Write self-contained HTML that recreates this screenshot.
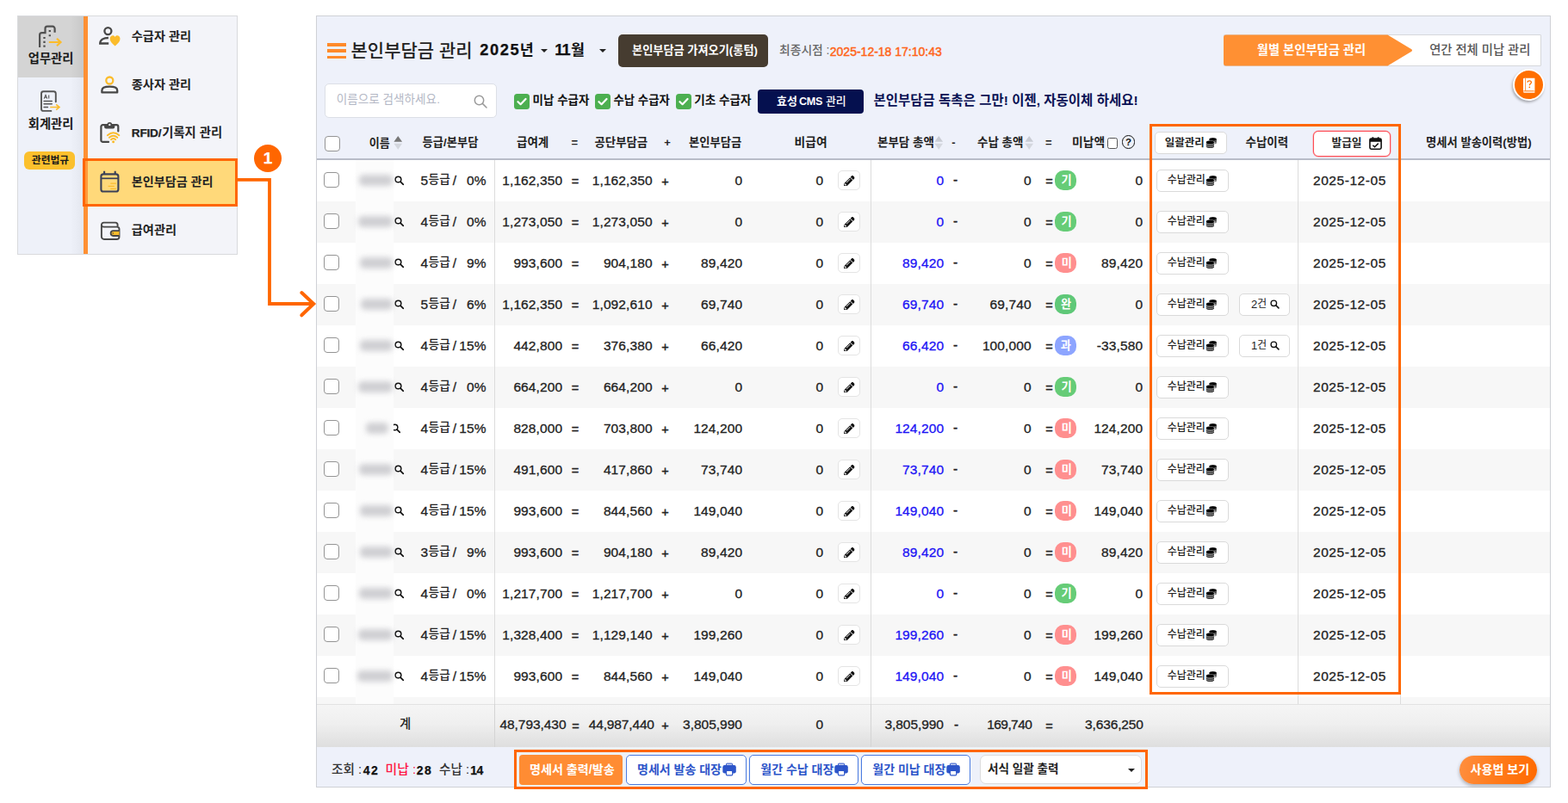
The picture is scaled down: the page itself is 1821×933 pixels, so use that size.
<!DOCTYPE html>
<html lang="ko">
<head>
<meta charset="utf-8">
<title>본인부담금 관리</title>
<style>
html,body{margin:0;padding:0;background:#fff;}
body{width:1821px;height:933px;position:relative;overflow:hidden;font-family:"Liberation Sans",sans-serif;color:#222;}
body div,body svg{position:absolute;box-sizing:border-box;}
.t{white-space:nowrap;}
.h{font-family:"Liberation Sans","Noto Sans CJK KR",sans-serif;font-weight:700;}
.hm{font-weight:500;}
.hr{font-weight:400;}
.cb{width:18px;height:18px;border:1.4px solid #949494;border-radius:4px;background:#fff;}
.gcb{width:18px;height:18px;border-radius:3.5px;background:#4caf50;}
.btn{background:#fff;border:1.3px solid #dadada;border-radius:5px;}
.pill{width:25px;height:23px;border-radius:10px;color:#fff;font-weight:700;font-size:14px;line-height:23px;text-align:center;}
.sep{width:1px;background:#dcdcdc;}
.bb{background:#fff;border:1px solid #4a7be0;border-radius:5px;}
</style>
</head>
<body>

<svg width="0" height="0" style="left:0;top:0">
<defs>
<symbol id="i-coin" viewBox="0 0 14 14">
 <path d="M4.2 3.1c0-1.2 1.9-2.1 4.4-2.1s4.4.9 4.4 2.1v3.6c0 .9-1 1.6-2.6 1.9V6.1c0-1.4-2.2-2.4-4.8-2.4-.5 0-.9 0-1.4.1z" fill="#858585"/>
 <ellipse cx="8.6" cy="3" rx="4.2" ry="1.7" fill="#000"/>
 <path d="M.8 6.4c0-1.2 2-2.1 4.6-2.1S10 5.2 10 6.4v4.6c0 1.2-2 2.1-4.6 2.1S.8 12.2.8 11z" fill="#858585"/>
 <ellipse cx="5.4" cy="6.4" rx="4.5" ry="1.9" fill="#000"/>
 <path d="M.8 9c.9.9 2.6 1.3 4.6 1.3s3.7-.4 4.6-1.3M.8 11.2c.9.9 2.6 1.3 4.6 1.3s3.7-.4 4.6-1.3" fill="none" stroke="#111" stroke-width=".8"/>
 <path d="M10.5 5.8c1-.2 1.9-.6 2.4-1.1" fill="none" stroke="#111" stroke-width=".7"/>
</symbol>
<symbol id="i-pen" viewBox="0 0 512 512">
 <path fill="#111" d="M497.9 142.1l-46.1 46.1c-4.7 4.7-12.3 4.7-17 0l-111-111c-4.7-4.7-4.7-12.3 0-17l46.1-46.1c18.7-18.7 49.1-18.7 67.9 0l60.1 60.1c18.8 18.7 18.8 49.1 0 67.9zM284.2 99.8L21.6 362.4.4 483.9c-2.9 16.4 11.4 30.6 27.8 27.8l121.5-21.3 262.6-262.6c4.7-4.7 4.7-12.3 0-17l-111-111c-4.8-4.7-12.4-4.7-17.1 0zM124.1 339.9c-5.5-5.5-5.5-14.3 0-19.8l154-154c5.5-5.5 14.3-5.5 19.8 0s5.5 14.3 0 19.8l-154 154c-5.5 5.5-14.3 5.5-19.8 0zM88 424h48v36.3l-64.5 11.3-31.1-31.1L51.7 376H88v48z"/>
</symbol>
<symbol id="i-mag" viewBox="0 0 12 12">
 <circle cx="4.7" cy="4.7" r="3.5" fill="none" stroke="currentColor" stroke-width="1.55"/>
 <path d="M7.4 7.4L10.8 10.8" stroke="currentColor" stroke-width="1.75" stroke-linecap="round"/>
</symbol>
<symbol id="i-print" viewBox="0 0 16 16">
 <rect x="4.4" y="1.1" width="7.2" height="4" rx=".9" fill="#c9d3f1" stroke="#2d55c9" stroke-width="1"/>
 <rect x=".3" y="3.1" width="15.5" height="9.4" rx="2.2" fill="#2d55c9"/>
 <rect x="4.4" y="9.4" width="7.3" height="5.5" rx="1.2" fill="#fff" stroke="#2d55c9" stroke-width="1.2"/>
</symbol>
<symbol id="i-cal" viewBox="0 0 15 15">
 <rect x=".9" y="2" width="13.2" height="12.2" rx="1.6" fill="#fff" stroke="#111" stroke-width="1.6"/>
 <path d="M.9 3.6A1.6 1.6 0 0 1 2.5 2h10A1.6 1.6 0 0 1 14.1 3.6V5.8H.9z" fill="#111"/>
 <rect x="3.4" y=".2" width="1.9" height="3" rx=".5" fill="#111"/>
 <rect x="9.7" y=".2" width="1.9" height="3" rx=".5" fill="#111"/>
 <path d="M4.3 9.7l2.2 2.1 4.2-4.2" fill="none" stroke="#111" stroke-width="1.5"/>
</symbol>
<symbol id="i-sort" viewBox="0 0 10 16">
 <path d="M5 .5L9.6 7H.4z" fill="var(--u,#c9ccd4)"/>
 <path d="M5 15.5L.4 9h9.2z" fill="#d4d7de"/>
</symbol>
</defs>
</svg>

<div style="left:20px;top:18px;width:256px;height:278px;background:#f3f4f9;border:1px solid #d9dadd;"></div>
<div style="left:21px;top:19px;width:76px;height:276px;background:linear-gradient(90deg,#eef1f9 0,#eef1f9 80%,#e4e7ef 100%);"></div>
<div style="left:21px;top:19px;width:76px;height:71px;background:linear-gradient(90deg,#d4d4d4 0,#d4d4d4 80%,#c9c9c9 100%);"></div>
<div style="left:97px;top:19px;width:5px;height:276px;background:#ff9033;"></div>
<svg style="left:40px;top:24px" width="36" height="32" viewBox="0 0 36 32" fill="none" stroke="#505050" stroke-width="2.2">
<path d="M6.1 30.9V16.7A2.5 2.5 0 0 1 8.6 14.2H12.5V9.2A2.5 2.5 0 0 1 15 6.7H21.1A2.5 2.5 0 0 1 23.6 9.2V13.8"/>
<path d="M11.5 19v2.1M11.5 23.8v2.1M11.5 28.6v2.1M17.8 11v2.1M17.8 16.2v2.1" stroke-width="2.3"/>
<path d="M16.8 25H30.2M26 20.8L30.5 25L26 29.2" stroke="#fbbc2c" stroke-width="2.2"/>
</svg>
<svg style="left:40px;top:101px" width="36" height="32" viewBox="0 0 36 32" fill="none" stroke="#555" stroke-width="1.9">
<path d="M19.4 27.9H10.5A2.5 2.5 0 0 1 8 25.4V7.8A2.5 2.5 0 0 1 10.5 5.3H22.3A2.5 2.5 0 0 1 24.8 7.8V17.3" stroke-linecap="round"/>
<path d="M11 16.45H20.3M11 19.7H20.3M11 23.5H15.5" stroke-width="1.4" stroke-linecap="round"/>
<path d="M18.2 23.5H28.8M25.2 20.4L29 23.5L25.2 26.6" stroke="#fbbc2c" stroke-width="1.6"/>
<path d="M11.2 13.6L13 9.4L14.8 13.6M11.9 12.3H14.1M16.7 9.4V13.6" stroke-width="1.1"/>
</svg>
<div class="t h" style="left:32.8px;top:60.4px;font-size:14.3px;line-height:17.2px;color:#1a1a1a">업무관리</div>
<div class="t h" style="left:32.8px;top:135.9px;font-size:14.3px;line-height:17.1px;color:#1a1a1a">회계관리</div>
<div style="left:28px;top:176px;width:59px;height:21px;background:#fbc02d;border-radius:6px;"></div>
<div class="t h" style="left:36.8px;top:179.4px;font-size:11.8px;line-height:14.1px;color:#1a1a1a">관련법규</div>
<div class="t" style="top:144.5px;font-size:13.6px;line-height:20px;font-weight:700;-webkit-text-stroke:.25px;letter-spacing:-0.2px;left:20.05px;width:300px;text-align:center;">RFID/</div>
<div class="t h" style="left:188.3px;top:145.9px;font-size:14.3px;line-height:17.2px">기록지 관리</div>
<div style="left:96px;top:184px;width:180px;height:56px;background:#ffd97a;border:3px solid #ff6600;"></div>
<div style="left:99px;top:187px;width:3px;height:50px;background:#ff9a3c;"></div>
<div class="t h" style="left:152.8px;top:33.5px;font-size:14.2px;line-height:17.1px">수급자 관리</div>
<div class="t h" style="left:152.8px;top:89.5px;font-size:14.2px;line-height:17.1px">종사자 관리</div>
<div class="t h" style="left:152.8px;top:202.6px;font-size:14.1px;line-height:16.9px">본인부담금 관리</div>
<div class="t h" style="left:152.8px;top:259px;font-size:14.2px;line-height:17.1px">급여관리</div>
<svg style="left:110px;top:26px" width="36" height="32" viewBox="0 0 36 32" fill="none" stroke="#474747" stroke-width="2.3">
<circle cx="15.4" cy="10.1" r="4"/>
<path d="M15.9 18C10 18 6.2 20.6 6.2 24.5H16.2"/>
<path d="M23.6 27.4C20 24.5 17.7 22.1 17.7 19C17.7 16.8 19.3 15.3 21 15.3C22.2 15.3 23.1 15.9 23.6 16.9C24.1 15.9 25 15.3 26.2 15.3C27.9 15.3 29.5 16.8 29.5 19C29.5 22.1 27.2 24.5 23.6 27.4Z" fill="#fbbc2c" stroke="none"/>
</svg>
<svg style="left:110px;top:82px" width="36" height="32" viewBox="0 0 36 32" fill="none" stroke-width="2.3">
<circle cx="17.3" cy="11.5" r="4" stroke="#fbbc2c"/>
<path d="M8.4 25.4V23C8.4 20.3 12.3 18.7 17.3 18.7S26.2 20.3 26.2 23V25.4Z" stroke="#474747" stroke-linejoin="round"/>
</svg>
<svg style="left:110px;top:138px" width="36" height="32" viewBox="0 0 36 32" fill="none" stroke="#474747" stroke-width="2.2">
<path d="M16 26.9H9.4A2 2 0 0 1 7.4 24.9V9.1A2 2 0 0 1 9.4 7.1H25.3A2 2 0 0 1 27.3 9.1V14.4" stroke-linecap="round"/>
<path d="M11.1 7H14.4A2.9 2.9 0 0 1 20.2 7H23.3V9.5A2 2 0 0 1 21.3 11.5H13.1A2 2 0 0 1 11.1 9.5Z" fill="#474747" stroke="none"/>
<circle cx="17.3" cy="6.9" r="1.2" fill="#f3f4f9" stroke="none"/>
<path d="M14.8 19.2Q21.6 13.2 28.4 19.2M16.9 21.8Q21.6 17.6 26.3 21.8M19 24.2Q21.6 21.9 24.2 24.2" stroke="#fbbc2c" stroke-width="1.9" stroke-linecap="round"/>
<circle cx="21.6" cy="26.7" r="1.5" fill="#fbbc2c" stroke="none"/>
</svg>
<svg style="left:110px;top:195px" width="36" height="32" viewBox="0 0 36 32" fill="none" stroke="#3b4157" stroke-width="2.1">
<rect x="7.4" y="7.4" width="20" height="20.1" rx="2.6"/>
<path d="M7.4 12.3H27.4" stroke-width="1.7"/>
<path d="M11.1 3.8V7.4M23.7 3.8V7.4"/>
<path d="M18.3 18.2H24.9M15.6 21.4H22.8M18.3 24.3H24.9" stroke="#fbbc2c" stroke-width="1.3"/>
</svg>
<svg style="left:110px;top:252px" width="36" height="32" viewBox="0 0 36 32" fill="none" stroke="#474747" stroke-width="1.9">
<path d="M7.9 9.2V23A3 3 0 0 0 10.9 26H25.5A3 3 0 0 0 28.5 23V14A2.6 2.6 0 0 0 25.9 11.6H10.5A2.6 2.6 0 0 1 7.9 9.2A2.6 2.6 0 0 1 10.5 6.6H24A2.6 2.6 0 0 1 26.6 9.2V11.5"/>
<path d="M28.5 16.2H21.5A2.9 2.9 0 0 0 21.5 22H28.5" fill="#fbbc2c" stroke-width="1.8"/>
<circle cx="21.3" cy="19" r=".8" fill="#474747" stroke="none"/>
</svg>
<div style="left:367px;top:18px;width:1434px;height:897px;background:#eef1fa;border:1px solid #cfd1d6;"></div>
<div style="left:368px;top:186px;width:1432px;height:632px;background:#fff;"></div>
<div style="left:380px;top:50px;width:21.7px;height:3.6px;background:#ff8a2a;"></div>
<div style="left:380px;top:57.3px;width:21.7px;height:3.6px;background:#ff8a2a;"></div>
<div style="left:380px;top:64.6px;width:21.7px;height:3.6px;background:#ff8a2a;"></div>
<div class="t h hm" style="left:407.5px;top:46px;font-size:21px;line-height:25.2px">본인부담금 관리</div>
<div class="t" style="top:44px;font-size:18.3px;line-height:28px;font-weight:700;-webkit-text-stroke:.25px;color:#111;letter-spacing:1.55px;left:430.77px;width:300px;text-align:center;">2025</div>
<div class="t h" style="left:603.8px;top:47.5px;font-size:17.4px;line-height:20.9px;color:#111">년</div>
<div class="t" style="top:44px;font-size:18.3px;line-height:28px;font-weight:700;-webkit-text-stroke:.25px;color:#111;letter-spacing:-1px;left:503px;width:300px;text-align:center;">11</div>
<div class="t h" style="left:663px;top:47.6px;font-size:17.4px;line-height:20.9px;color:#111">월</div>
<svg style="left:627.5px;top:57px" width="8" height="4" viewBox="0 0 8 4"><path d="M0 0h8L4 4z" fill="#222"/></svg>
<svg style="left:695.8px;top:57px" width="8" height="4" viewBox="0 0 8 4"><path d="M0 0h8L4 4z" fill="#222"/></svg>
<div style="left:718px;top:39.5px;width:174px;height:38px;background:#463c30;border-radius:5px;"></div>
<div class="t h" style="left:734px;top:50.8px;font-size:13.2px;line-height:15.9px;color:#fff">본인부담금 가져오기(롱텀)</div>
<div class="t h hm" style="left:905px;top:51px;font-size:13.8px;line-height:16.5px;color:#666">최종시점 :</div>
<div class="t" style="top:49.5px;font-size:14px;line-height:20px;color:#ff6418;left:878.8px;width:300px;text-align:center;-webkit-text-stroke:.45px #ff6418;">2025-12-18 17:10:43</div>
<div style="left:1421px;top:40px;width:369px;height:37px;background:#fff;border:1px solid #d6d8dc;border-radius:1px;"></div>
<svg style="left:1421px;top:40px" width="222" height="37" viewBox="0 0 222 37"><path d="M3 .5H190.5L218.3 17.3a1.4 1.4 0 0 1 0 2.4L190.5 36.5H3A3 3 0 0 1 0 33.5V3.5A3 3 0 0 1 3 .5z" fill="#ff9033"/></svg>
<div class="t h" style="left:1459.8px;top:50.1px;font-size:14.3px;line-height:17.2px;color:#fff">월별 본인부담금 관리</div>
<div class="t h hm" style="left:1660.2px;top:50.1px;font-size:14.3px;line-height:17.2px;color:#555">연간 전체 미납 관리</div>
<div style="left:1757.2px;top:80.2px;width:37px;height:37px;background:#ff6f00;border:2px solid #fff;border-radius:50%;box-shadow:-1px 2px 3px rgba(0,0,0,.3);"></div>
<svg style="left:1768px;top:89.5px" width="16" height="19" viewBox="0 0 16 19">
<path d="M1 1.8A1.1 1.1 0 0 1 2.1.7H14.4V15H1z" fill="#fff"/>
<path d="M3.5.7V15" stroke="#ff6f00" stroke-width=".7"/>
<path d="M1 15.3V16.8A1.1 1.1 0 0 0 2.1 17.9H14.4V15z" fill="#ffd9bd"/>
<path d="M2.2 15.6H13.5" stroke="#ff6f00" stroke-width=".6"/>
<path d="M6 5.8C6 4.5 7 3.8 8.2 3.8S10.4 4.5 10.4 5.7C10.4 7.3 8.3 7.3 8.3 9.3" fill="none" stroke="#ff6f00" stroke-width="1.3"/>
<circle cx="8.3" cy="11.3" r=".85" fill="#ff6f00"/>
</svg>
<div style="left:377.3px;top:97.3px;width:199.4px;height:40px;background:#fff;border:1px solid #dcdfe6;border-radius:5px;"></div>
<div class="t h hr" style="left:390.8px;top:108.4px;font-size:13.6px;line-height:16.3px;color:#b4b8c5">이름으로 검색하세요.</div>
<svg style="left:549.5px;top:109.5px" width="16" height="16" viewBox="0 0 16 16" fill="none" stroke="#9a9a9a" stroke-width="1.5"><circle cx="6.5" cy="6.5" r="5.2"/><path d="M10.4 10.4L15 15" stroke-linecap="round"/></svg>
<div class="gcb" style="left:597px;top:108.7px"><svg style="left:3px;top:4px" width="12" height="10" viewBox="0 0 12 10"><path d="M1.5 5.2L4.6 8.2 10.5 2" fill="none" stroke="#fff" stroke-width="2.2" stroke-linecap="round" stroke-linejoin="round"/></svg></div>
<div class="t h" style="left:618.6px;top:109.2px;font-size:13.5px;line-height:16.2px;color:#111">미납 수급자</div>
<div class="gcb" style="left:691.3px;top:108.7px"><svg style="left:3px;top:4px" width="12" height="10" viewBox="0 0 12 10"><path d="M1.5 5.2L4.6 8.2 10.5 2" fill="none" stroke="#fff" stroke-width="2.2" stroke-linecap="round" stroke-linejoin="round"/></svg></div>
<div class="t h" style="left:712.5px;top:109.3px;font-size:13.4px;line-height:16.1px;color:#111">수납 수급자</div>
<div class="gcb" style="left:785px;top:108.7px"><svg style="left:3px;top:4px" width="12" height="10" viewBox="0 0 12 10"><path d="M1.5 5.2L4.6 8.2 10.5 2" fill="none" stroke="#fff" stroke-width="2.2" stroke-linecap="round" stroke-linejoin="round"/></svg></div>
<div class="t h" style="left:806.3px;top:109.2px;font-size:13.6px;line-height:16.3px;color:#111">기초 수급자</div>
<div style="left:880px;top:103.7px;width:123px;height:28.8px;background:#05104f;border-radius:4px;"></div>
<div class="t h" style="left:902.1px;top:109.9px;font-size:13px;line-height:15.6px;color:#fff">효성</div>
<div class="t" style="top:108px;font-size:12.6px;line-height:20px;font-weight:700;color:#fff;letter-spacing:-0.25px;left:791.62px;width:300px;text-align:center;">CMS</div>
<div class="t h hm" style="left:959px;top:110px;font-size:12.9px;line-height:15.5px;color:#fff">관리</div>
<div class="t h" style="left:1014.5px;top:108.4px;font-size:15.5px;line-height:18.6px;color:#0a1254">본인부담금 독촉은 그만! 이젠, 자동이체 하세요!</div>
<div class="cb" style="left:377px;top:157.5px"></div>
<div class="t h" style="left:428.8px;top:158.5px;font-size:13.1px;line-height:15.8px">이름</div>
<svg style="left:457px;top:157.3px;--u:#777" width="10.5" height="17.5"><use href="#i-sort"/></svg>
<div class="t h" style="left:490.5px;top:158.4px;font-size:13.3px;line-height:15.9px">등급/본부담</div>
<div class="t h" style="left:600px;top:158.3px;font-size:13.5px;line-height:16.2px">급여계</div>
<div class="t" style="top:156.4px;font-size:13px;line-height:20px;font-weight:700;left:517.4px;width:300px;text-align:center;">=</div>
<div class="t h" style="left:690.5px;top:158.4px;font-size:13.4px;line-height:16.1px">공단부담금</div>
<div class="t" style="top:156.4px;font-size:13px;line-height:20px;font-weight:700;left:625px;width:300px;text-align:center;">+</div>
<div class="t h" style="left:800px;top:158.4px;font-size:13.3px;line-height:15.9px">본인부담금</div>
<div class="t h" style="left:922.5px;top:158.1px;font-size:13.8px;line-height:16.6px">비급여</div>
<div class="t h" style="left:1019px;top:158.3px;font-size:13.5px;line-height:16.2px">본부담 총액</div>
<svg style="left:1085px;top:157.3px" width="10.5" height="17.5"><use href="#i-sort"/></svg>
<div class="t" style="top:156.4px;font-size:13px;line-height:20px;font-weight:700;left:957.5px;width:300px;text-align:center;">-</div>
<div class="t h" style="left:1135px;top:158.3px;font-size:13.5px;line-height:16.2px">수납 총액</div>
<svg style="left:1190px;top:157.3px" width="10.5" height="17.5"><use href="#i-sort"/></svg>
<div class="t" style="top:156.4px;font-size:13px;line-height:20px;font-weight:700;left:1067.8px;width:300px;text-align:center;">=</div>
<div class="t h" style="left:1245px;top:158.1px;font-size:13.8px;line-height:16.5px">미납액</div>
<div style="left:1285.8px;top:160px;width:12.5px;height:12.5px;background:#fff;border:1.2px solid #555;border-radius:2.5px;"></div>
<div style="left:1302.5px;top:157.2px;width:15.6px;height:15.6px;border:1.4px solid #111;border-radius:50%;"></div>
<div class="t" style="top:158.2px;font-size:11.5px;line-height:14px;font-weight:700;color:#111;left:1160.4px;width:300px;text-align:center;">?</div>
<div class="btn" style="left:1340.5px;top:152.5px;width:84px;height:26.5px;"></div>
<div class="t h" style="left:1352.7px;top:158.5px;font-size:12.5px;line-height:15px">일괄관리</div>
<svg style="left:1399.5px;top:158.5px" width="14" height="14"><use href="#i-coin"/></svg>
<div class="t h" style="left:1446.5px;top:158.3px;font-size:13.5px;line-height:16.2px">수납이력</div>
<div style="left:1525px;top:151.5px;width:90px;height:30.5px;background:#fff;border:1px solid #ff4d55;border-radius:6px;box-shadow:0 0 0 .5px rgba(255,77,85,.55);"></div>
<div class="t h" style="left:1546.5px;top:158.6px;font-size:12.7px;line-height:15.3px">발급일</div>
<svg style="left:1590px;top:158.5px" width="15" height="15"><use href="#i-cal"/></svg>
<div class="t h" style="left:1656px;top:158.4px;font-size:13.3px;line-height:15.9px">명세서 발송이력(방법)</div>
<div style="left:368px;top:184px;width:1432px;height:2px;background:#b8bcc8;"></div>
<div style="left:368px;top:233.5px;width:1432px;height:48px;background:#f7f7f7;"></div>
<div style="left:368px;top:329.5px;width:1432px;height:48px;background:#f7f7f7;"></div>
<div style="left:368px;top:425.5px;width:1432px;height:48px;background:#f7f7f7;"></div>
<div style="left:368px;top:521.5px;width:1432px;height:48px;background:#f7f7f7;"></div>
<div style="left:368px;top:617.5px;width:1432px;height:48px;background:#f7f7f7;"></div>
<div style="left:368px;top:713.5px;width:1432px;height:48px;background:#f7f7f7;"></div>
<div style="left:368px;top:809.5px;width:1432px;height:8.5px;background:#f7f7f7;"></div>
<div style="left:412.7px;top:186px;width:44.3px;height:632px;background:#fcfcfc;"></div>
<div class="cb" style="left:376.2px;top:200.3px"></div>
<svg style="left:458px;top:204.2px;color:#111" width="11.5" height="11.5"><use href="#i-mag"/></svg>
<div style="left:417px;top:203px;width:39px;height:13px;background:#bdbdc2;border-radius:5px;filter:blur(3.2px);opacity:.7"></div>
<div class="t" style="top:199.5px;font-size:15.5px;line-height:20px;letter-spacing:0.1px;left:488.6px;-webkit-text-stroke:.3px;">5</div>
<div class="t h hm" style="left:497.6px;top:201.3px;font-size:13.7px;line-height:16.4px">등급</div>
<div class="t" style="top:199.5px;font-size:15.5px;line-height:20px;left:377.8px;width:300px;text-align:center;-webkit-text-stroke:.3px;">/</div>
<div class="t" style="top:199.5px;font-size:15.5px;line-height:20px;letter-spacing:0.1px;right:1256.4px;-webkit-text-stroke:.3px;">0%</div>
<div class="t" style="top:199.5px;font-size:15.5px;line-height:20px;letter-spacing:0.1px;right:1167.9px;-webkit-text-stroke:.3px;">1,162,350</div>
<div class="t" style="top:201px;font-size:14.5px;line-height:20px;left:518px;width:300px;text-align:center;-webkit-text-stroke:.45px;">=</div>
<div class="t" style="top:199.5px;font-size:15.5px;line-height:20px;letter-spacing:0.1px;right:1063.4px;-webkit-text-stroke:.3px;">1,162,350</div>
<div class="t" style="top:200.7px;font-size:14.5px;line-height:20px;left:622.6px;width:300px;text-align:center;-webkit-text-stroke:.45px;">+</div>
<div class="t" style="top:199.5px;font-size:15.5px;line-height:20px;letter-spacing:0.1px;right:958.9px;-webkit-text-stroke:.3px;">0</div>
<div class="t" style="top:199.5px;font-size:15.5px;line-height:20px;letter-spacing:0.1px;right:864.9px;-webkit-text-stroke:.3px;">0</div>
<div class="btn" style="left:973.2px;top:198.2px;width:25.6px;height:22.6px;border-color:#e4e4e4"><svg style="left:5.8px;top:4.5px" width="12.6" height="12.6"><use href="#i-pen"/></svg></div>
<div class="t" style="top:199.5px;font-size:15.5px;line-height:20px;color:#1b12f5;letter-spacing:0.1px;right:724.9px;-webkit-text-stroke:.3px;">0</div>
<div class="t" style="top:199.3px;font-size:15.5px;line-height:20px;left:959.5px;width:300px;text-align:center;-webkit-text-stroke:.45px;">-</div>
<div class="t" style="top:199.5px;font-size:15.5px;line-height:20px;letter-spacing:0.1px;right:623.4px;-webkit-text-stroke:.3px;">0</div>
<div class="t" style="top:201px;font-size:14.5px;line-height:20px;left:1068.6px;width:300px;text-align:center;-webkit-text-stroke:.45px;">=</div>
<div class="pill" style="left:1225px;top:198px;background:#66cc77"></div>
<div class="t h" style="left:1232.4px;top:201.6px;font-size:13.2px;line-height:15.8px;color:#fff">기</div>
<div class="t" style="top:199.5px;font-size:15.5px;line-height:20px;letter-spacing:0.1px;right:493.9px;-webkit-text-stroke:.3px;">0</div>
<div class="btn" style="left:1342.5px;top:196.5px;width:84.2px;height:26px"></div>
<div class="t h hm" style="left:1355.7px;top:202.3px;font-size:12px;line-height:14.4px">수납관리</div>
<svg style="left:1400.2px;top:202.8px" width="14" height="14"><use href="#i-coin"/></svg>
<div class="t" style="top:199.5px;font-size:15.5px;line-height:20px;letter-spacing:0.56px;left:1417.43px;width:300px;text-align:center;-webkit-text-stroke:.3px;">2025-12-05</div>
<div class="cb" style="left:376.2px;top:248.3px"></div>
<svg style="left:458px;top:252.2px;color:#111" width="11.5" height="11.5"><use href="#i-mag"/></svg>
<div style="left:416px;top:251px;width:40px;height:13px;background:#bdbdc2;border-radius:5px;filter:blur(3.2px);opacity:.7"></div>
<div class="t" style="top:247.5px;font-size:15.5px;line-height:20px;letter-spacing:0.1px;left:488.6px;-webkit-text-stroke:.3px;">4</div>
<div class="t h hm" style="left:497.6px;top:249.3px;font-size:13.7px;line-height:16.4px">등급</div>
<div class="t" style="top:247.5px;font-size:15.5px;line-height:20px;left:377.8px;width:300px;text-align:center;-webkit-text-stroke:.3px;">/</div>
<div class="t" style="top:247.5px;font-size:15.5px;line-height:20px;letter-spacing:0.1px;right:1256.4px;-webkit-text-stroke:.3px;">0%</div>
<div class="t" style="top:247.5px;font-size:15.5px;line-height:20px;letter-spacing:0.1px;right:1167.9px;-webkit-text-stroke:.3px;">1,273,050</div>
<div class="t" style="top:249px;font-size:14.5px;line-height:20px;left:518px;width:300px;text-align:center;-webkit-text-stroke:.45px;">=</div>
<div class="t" style="top:247.5px;font-size:15.5px;line-height:20px;letter-spacing:0.1px;right:1063.4px;-webkit-text-stroke:.3px;">1,273,050</div>
<div class="t" style="top:248.7px;font-size:14.5px;line-height:20px;left:622.6px;width:300px;text-align:center;-webkit-text-stroke:.45px;">+</div>
<div class="t" style="top:247.5px;font-size:15.5px;line-height:20px;letter-spacing:0.1px;right:958.9px;-webkit-text-stroke:.3px;">0</div>
<div class="t" style="top:247.5px;font-size:15.5px;line-height:20px;letter-spacing:0.1px;right:864.9px;-webkit-text-stroke:.3px;">0</div>
<div class="btn" style="left:973.2px;top:246.2px;width:25.6px;height:22.6px;border-color:#e4e4e4"><svg style="left:5.8px;top:4.5px" width="12.6" height="12.6"><use href="#i-pen"/></svg></div>
<div class="t" style="top:247.5px;font-size:15.5px;line-height:20px;color:#1b12f5;letter-spacing:0.1px;right:724.9px;-webkit-text-stroke:.3px;">0</div>
<div class="t" style="top:247.3px;font-size:15.5px;line-height:20px;left:959.5px;width:300px;text-align:center;-webkit-text-stroke:.45px;">-</div>
<div class="t" style="top:247.5px;font-size:15.5px;line-height:20px;letter-spacing:0.1px;right:623.4px;-webkit-text-stroke:.3px;">0</div>
<div class="t" style="top:249px;font-size:14.5px;line-height:20px;left:1068.6px;width:300px;text-align:center;-webkit-text-stroke:.45px;">=</div>
<div class="pill" style="left:1225px;top:246px;background:#66cc77"></div>
<div class="t h" style="left:1232.4px;top:249.6px;font-size:13.2px;line-height:15.8px;color:#fff">기</div>
<div class="t" style="top:247.5px;font-size:15.5px;line-height:20px;letter-spacing:0.1px;right:493.9px;-webkit-text-stroke:.3px;">0</div>
<div class="btn" style="left:1342.5px;top:244.5px;width:84.2px;height:26px"></div>
<div class="t h hm" style="left:1355.7px;top:250.3px;font-size:12px;line-height:14.4px">수납관리</div>
<svg style="left:1400.2px;top:250.8px" width="14" height="14"><use href="#i-coin"/></svg>
<div class="t" style="top:247.5px;font-size:15.5px;line-height:20px;letter-spacing:0.56px;left:1417.43px;width:300px;text-align:center;-webkit-text-stroke:.3px;">2025-12-05</div>
<div class="cb" style="left:376.2px;top:296.3px"></div>
<svg style="left:458px;top:300.2px;color:#111" width="11.5" height="11.5"><use href="#i-mag"/></svg>
<div style="left:418px;top:299px;width:38px;height:13px;background:#bdbdc2;border-radius:5px;filter:blur(3.2px);opacity:.7"></div>
<div class="t" style="top:295.5px;font-size:15.5px;line-height:20px;letter-spacing:0.1px;left:488.6px;-webkit-text-stroke:.3px;">4</div>
<div class="t h hm" style="left:497.6px;top:297.3px;font-size:13.7px;line-height:16.4px">등급</div>
<div class="t" style="top:295.5px;font-size:15.5px;line-height:20px;left:377.8px;width:300px;text-align:center;-webkit-text-stroke:.3px;">/</div>
<div class="t" style="top:295.5px;font-size:15.5px;line-height:20px;letter-spacing:0.1px;right:1256.4px;-webkit-text-stroke:.3px;">9%</div>
<div class="t" style="top:295.5px;font-size:15.5px;line-height:20px;letter-spacing:0.1px;right:1167.9px;-webkit-text-stroke:.3px;">993,600</div>
<div class="t" style="top:297px;font-size:14.5px;line-height:20px;left:518px;width:300px;text-align:center;-webkit-text-stroke:.45px;">=</div>
<div class="t" style="top:295.5px;font-size:15.5px;line-height:20px;letter-spacing:0.1px;right:1063.4px;-webkit-text-stroke:.3px;">904,180</div>
<div class="t" style="top:296.7px;font-size:14.5px;line-height:20px;left:622.6px;width:300px;text-align:center;-webkit-text-stroke:.45px;">+</div>
<div class="t" style="top:295.5px;font-size:15.5px;line-height:20px;letter-spacing:0.1px;right:958.9px;-webkit-text-stroke:.3px;">89,420</div>
<div class="t" style="top:295.5px;font-size:15.5px;line-height:20px;letter-spacing:0.1px;right:864.9px;-webkit-text-stroke:.3px;">0</div>
<div class="btn" style="left:973.2px;top:294.2px;width:25.6px;height:22.6px;border-color:#e4e4e4"><svg style="left:5.8px;top:4.5px" width="12.6" height="12.6"><use href="#i-pen"/></svg></div>
<div class="t" style="top:295.5px;font-size:15.5px;line-height:20px;color:#1b12f5;letter-spacing:0.1px;right:724.9px;-webkit-text-stroke:.3px;">89,420</div>
<div class="t" style="top:295.3px;font-size:15.5px;line-height:20px;left:959.5px;width:300px;text-align:center;-webkit-text-stroke:.45px;">-</div>
<div class="t" style="top:295.5px;font-size:15.5px;line-height:20px;letter-spacing:0.1px;right:623.4px;-webkit-text-stroke:.3px;">0</div>
<div class="t" style="top:297px;font-size:14.5px;line-height:20px;left:1068.6px;width:300px;text-align:center;-webkit-text-stroke:.45px;">=</div>
<div class="pill" style="left:1225px;top:294px;background:#ff8f8f"></div>
<div class="t h" style="left:1232.7px;top:297.6px;font-size:13.2px;line-height:15.8px;color:#fff">미</div>
<div class="t" style="top:295.5px;font-size:15.5px;line-height:20px;letter-spacing:0.1px;right:493.9px;-webkit-text-stroke:.3px;">89,420</div>
<div class="btn" style="left:1342.5px;top:292.5px;width:84.2px;height:26px"></div>
<div class="t h hm" style="left:1355.7px;top:298.3px;font-size:12px;line-height:14.4px">수납관리</div>
<svg style="left:1400.2px;top:298.8px" width="14" height="14"><use href="#i-coin"/></svg>
<div class="t" style="top:295.5px;font-size:15.5px;line-height:20px;letter-spacing:0.56px;left:1417.43px;width:300px;text-align:center;-webkit-text-stroke:.3px;">2025-12-05</div>
<div class="cb" style="left:376.2px;top:344.3px"></div>
<svg style="left:458px;top:348.2px;color:#111" width="11.5" height="11.5"><use href="#i-mag"/></svg>
<div style="left:419px;top:347px;width:37px;height:13px;background:#bdbdc2;border-radius:5px;filter:blur(3.2px);opacity:.7"></div>
<div class="t" style="top:343.5px;font-size:15.5px;line-height:20px;letter-spacing:0.1px;left:488.6px;-webkit-text-stroke:.3px;">5</div>
<div class="t h hm" style="left:497.6px;top:345.3px;font-size:13.7px;line-height:16.4px">등급</div>
<div class="t" style="top:343.5px;font-size:15.5px;line-height:20px;left:377.8px;width:300px;text-align:center;-webkit-text-stroke:.3px;">/</div>
<div class="t" style="top:343.5px;font-size:15.5px;line-height:20px;letter-spacing:0.1px;right:1256.4px;-webkit-text-stroke:.3px;">6%</div>
<div class="t" style="top:343.5px;font-size:15.5px;line-height:20px;letter-spacing:0.1px;right:1167.9px;-webkit-text-stroke:.3px;">1,162,350</div>
<div class="t" style="top:345px;font-size:14.5px;line-height:20px;left:518px;width:300px;text-align:center;-webkit-text-stroke:.45px;">=</div>
<div class="t" style="top:343.5px;font-size:15.5px;line-height:20px;letter-spacing:0.1px;right:1063.4px;-webkit-text-stroke:.3px;">1,092,610</div>
<div class="t" style="top:344.7px;font-size:14.5px;line-height:20px;left:622.6px;width:300px;text-align:center;-webkit-text-stroke:.45px;">+</div>
<div class="t" style="top:343.5px;font-size:15.5px;line-height:20px;letter-spacing:0.1px;right:958.9px;-webkit-text-stroke:.3px;">69,740</div>
<div class="t" style="top:343.5px;font-size:15.5px;line-height:20px;letter-spacing:0.1px;right:864.9px;-webkit-text-stroke:.3px;">0</div>
<div class="btn" style="left:973.2px;top:342.2px;width:25.6px;height:22.6px;border-color:#e4e4e4"><svg style="left:5.8px;top:4.5px" width="12.6" height="12.6"><use href="#i-pen"/></svg></div>
<div class="t" style="top:343.5px;font-size:15.5px;line-height:20px;color:#1b12f5;letter-spacing:0.1px;right:724.9px;-webkit-text-stroke:.3px;">69,740</div>
<div class="t" style="top:343.3px;font-size:15.5px;line-height:20px;left:959.5px;width:300px;text-align:center;-webkit-text-stroke:.45px;">-</div>
<div class="t" style="top:343.5px;font-size:15.5px;line-height:20px;letter-spacing:0.1px;right:623.4px;-webkit-text-stroke:.3px;">69,740</div>
<div class="t" style="top:345px;font-size:14.5px;line-height:20px;left:1068.6px;width:300px;text-align:center;-webkit-text-stroke:.45px;">=</div>
<div class="pill" style="left:1225px;top:342px;background:#5fc878"></div>
<div class="t h" style="left:1231.9px;top:345.6px;font-size:13.2px;line-height:15.8px;color:#fff">완</div>
<div class="t" style="top:343.5px;font-size:15.5px;line-height:20px;letter-spacing:0.1px;right:493.9px;-webkit-text-stroke:.3px;">0</div>
<div class="btn" style="left:1342.5px;top:340.5px;width:84.2px;height:26px"></div>
<div class="t h hm" style="left:1355.7px;top:346.3px;font-size:12px;line-height:14.4px">수납관리</div>
<svg style="left:1400.2px;top:346.8px" width="14" height="14"><use href="#i-coin"/></svg>
<div class="btn" style="left:1439.3px;top:340.5px;width:59.2px;height:26px"></div>
<div class="t" style="top:343.5px;font-size:13px;line-height:20px;left:1452.9px;">2</div>
<div class="t h hr" style="left:1459.9px;top:346.2px;font-size:12.1px;line-height:14.5px">건</div>
<svg style="left:1474.5px;top:348.3px;color:#111" width="11" height="11"><use href="#i-mag"/></svg>
<div class="t" style="top:343.5px;font-size:15.5px;line-height:20px;letter-spacing:0.56px;left:1417.43px;width:300px;text-align:center;-webkit-text-stroke:.3px;">2025-12-05</div>
<div class="cb" style="left:376.2px;top:392.3px"></div>
<svg style="left:458px;top:396.2px;color:#111" width="11.5" height="11.5"><use href="#i-mag"/></svg>
<div style="left:418px;top:395px;width:38px;height:13px;background:#bdbdc2;border-radius:5px;filter:blur(3.2px);opacity:.7"></div>
<div class="t" style="top:391.5px;font-size:15.5px;line-height:20px;letter-spacing:0.1px;left:488.6px;-webkit-text-stroke:.3px;">4</div>
<div class="t h hm" style="left:497.6px;top:393.3px;font-size:13.7px;line-height:16.4px">등급</div>
<div class="t" style="top:391.5px;font-size:15.5px;line-height:20px;left:377.8px;width:300px;text-align:center;-webkit-text-stroke:.3px;">/</div>
<div class="t" style="top:391.5px;font-size:15.5px;line-height:20px;letter-spacing:0.1px;right:1256.4px;-webkit-text-stroke:.3px;">15%</div>
<div class="t" style="top:391.5px;font-size:15.5px;line-height:20px;letter-spacing:0.1px;right:1167.9px;-webkit-text-stroke:.3px;">442,800</div>
<div class="t" style="top:393px;font-size:14.5px;line-height:20px;left:518px;width:300px;text-align:center;-webkit-text-stroke:.45px;">=</div>
<div class="t" style="top:391.5px;font-size:15.5px;line-height:20px;letter-spacing:0.1px;right:1063.4px;-webkit-text-stroke:.3px;">376,380</div>
<div class="t" style="top:392.7px;font-size:14.5px;line-height:20px;left:622.6px;width:300px;text-align:center;-webkit-text-stroke:.45px;">+</div>
<div class="t" style="top:391.5px;font-size:15.5px;line-height:20px;letter-spacing:0.1px;right:958.9px;-webkit-text-stroke:.3px;">66,420</div>
<div class="t" style="top:391.5px;font-size:15.5px;line-height:20px;letter-spacing:0.1px;right:864.9px;-webkit-text-stroke:.3px;">0</div>
<div class="btn" style="left:973.2px;top:390.2px;width:25.6px;height:22.6px;border-color:#e4e4e4"><svg style="left:5.8px;top:4.5px" width="12.6" height="12.6"><use href="#i-pen"/></svg></div>
<div class="t" style="top:391.5px;font-size:15.5px;line-height:20px;color:#1b12f5;letter-spacing:0.1px;right:724.9px;-webkit-text-stroke:.3px;">66,420</div>
<div class="t" style="top:391.3px;font-size:15.5px;line-height:20px;left:959.5px;width:300px;text-align:center;-webkit-text-stroke:.45px;">-</div>
<div class="t" style="top:391.5px;font-size:15.5px;line-height:20px;letter-spacing:0.1px;right:623.4px;-webkit-text-stroke:.3px;">100,000</div>
<div class="t" style="top:393px;font-size:14.5px;line-height:20px;left:1068.6px;width:300px;text-align:center;-webkit-text-stroke:.45px;">=</div>
<div class="pill" style="left:1225px;top:390px;background:#8da5ff"></div>
<div class="t h" style="left:1231.8px;top:393.6px;font-size:13.2px;line-height:15.8px;color:#fff">과</div>
<div class="t" style="top:391.5px;font-size:15.5px;line-height:20px;letter-spacing:0.1px;right:493.9px;-webkit-text-stroke:.3px;">-33,580</div>
<div class="btn" style="left:1342.5px;top:388.5px;width:84.2px;height:26px"></div>
<div class="t h hm" style="left:1355.7px;top:394.3px;font-size:12px;line-height:14.4px">수납관리</div>
<svg style="left:1400.2px;top:394.8px" width="14" height="14"><use href="#i-coin"/></svg>
<div class="btn" style="left:1439.3px;top:388.5px;width:59.2px;height:26px"></div>
<div class="t" style="top:391.5px;font-size:13px;line-height:20px;left:1452.9px;">1</div>
<div class="t h hr" style="left:1459.9px;top:394.2px;font-size:12.1px;line-height:14.5px">건</div>
<svg style="left:1474.5px;top:396.3px;color:#111" width="11" height="11"><use href="#i-mag"/></svg>
<div class="t" style="top:391.5px;font-size:15.5px;line-height:20px;letter-spacing:0.56px;left:1417.43px;width:300px;text-align:center;-webkit-text-stroke:.3px;">2025-12-05</div>
<div class="cb" style="left:376.2px;top:440.3px"></div>
<svg style="left:458px;top:444.2px;color:#111" width="11.5" height="11.5"><use href="#i-mag"/></svg>
<div style="left:416px;top:443px;width:40px;height:13px;background:#bdbdc2;border-radius:5px;filter:blur(3.2px);opacity:.7"></div>
<div class="t" style="top:439.5px;font-size:15.5px;line-height:20px;letter-spacing:0.1px;left:488.6px;-webkit-text-stroke:.3px;">4</div>
<div class="t h hm" style="left:497.6px;top:441.3px;font-size:13.7px;line-height:16.4px">등급</div>
<div class="t" style="top:439.5px;font-size:15.5px;line-height:20px;left:377.8px;width:300px;text-align:center;-webkit-text-stroke:.3px;">/</div>
<div class="t" style="top:439.5px;font-size:15.5px;line-height:20px;letter-spacing:0.1px;right:1256.4px;-webkit-text-stroke:.3px;">0%</div>
<div class="t" style="top:439.5px;font-size:15.5px;line-height:20px;letter-spacing:0.1px;right:1167.9px;-webkit-text-stroke:.3px;">664,200</div>
<div class="t" style="top:441px;font-size:14.5px;line-height:20px;left:518px;width:300px;text-align:center;-webkit-text-stroke:.45px;">=</div>
<div class="t" style="top:439.5px;font-size:15.5px;line-height:20px;letter-spacing:0.1px;right:1063.4px;-webkit-text-stroke:.3px;">664,200</div>
<div class="t" style="top:440.7px;font-size:14.5px;line-height:20px;left:622.6px;width:300px;text-align:center;-webkit-text-stroke:.45px;">+</div>
<div class="t" style="top:439.5px;font-size:15.5px;line-height:20px;letter-spacing:0.1px;right:958.9px;-webkit-text-stroke:.3px;">0</div>
<div class="t" style="top:439.5px;font-size:15.5px;line-height:20px;letter-spacing:0.1px;right:864.9px;-webkit-text-stroke:.3px;">0</div>
<div class="btn" style="left:973.2px;top:438.2px;width:25.6px;height:22.6px;border-color:#e4e4e4"><svg style="left:5.8px;top:4.5px" width="12.6" height="12.6"><use href="#i-pen"/></svg></div>
<div class="t" style="top:439.5px;font-size:15.5px;line-height:20px;color:#1b12f5;letter-spacing:0.1px;right:724.9px;-webkit-text-stroke:.3px;">0</div>
<div class="t" style="top:439.3px;font-size:15.5px;line-height:20px;left:959.5px;width:300px;text-align:center;-webkit-text-stroke:.45px;">-</div>
<div class="t" style="top:439.5px;font-size:15.5px;line-height:20px;letter-spacing:0.1px;right:623.4px;-webkit-text-stroke:.3px;">0</div>
<div class="t" style="top:441px;font-size:14.5px;line-height:20px;left:1068.6px;width:300px;text-align:center;-webkit-text-stroke:.45px;">=</div>
<div class="pill" style="left:1225px;top:438px;background:#66cc77"></div>
<div class="t h" style="left:1232.4px;top:441.6px;font-size:13.2px;line-height:15.8px;color:#fff">기</div>
<div class="t" style="top:439.5px;font-size:15.5px;line-height:20px;letter-spacing:0.1px;right:493.9px;-webkit-text-stroke:.3px;">0</div>
<div class="btn" style="left:1342.5px;top:436.5px;width:84.2px;height:26px"></div>
<div class="t h hm" style="left:1355.7px;top:442.3px;font-size:12px;line-height:14.4px">수납관리</div>
<svg style="left:1400.2px;top:442.8px" width="14" height="14"><use href="#i-coin"/></svg>
<div class="t" style="top:439.5px;font-size:15.5px;line-height:20px;letter-spacing:0.56px;left:1417.43px;width:300px;text-align:center;-webkit-text-stroke:.3px;">2025-12-05</div>
<div class="cb" style="left:376.2px;top:488.3px"></div>
<svg style="left:453.5px;top:492.2px;color:#111" width="11.5" height="11.5"><use href="#i-mag"/></svg>
<div style="left:440px;top:488.5px;width:17px;height:18px;background:#fcfcfc;"></div>
<div style="left:425px;top:491px;width:26px;height:13px;background:#bdbdc2;border-radius:5px;filter:blur(3.2px);opacity:.7"></div>
<div class="t" style="top:487.5px;font-size:15.5px;line-height:20px;letter-spacing:0.1px;left:488.6px;-webkit-text-stroke:.3px;">4</div>
<div class="t h hm" style="left:497.6px;top:489.3px;font-size:13.7px;line-height:16.4px">등급</div>
<div class="t" style="top:487.5px;font-size:15.5px;line-height:20px;left:377.8px;width:300px;text-align:center;-webkit-text-stroke:.3px;">/</div>
<div class="t" style="top:487.5px;font-size:15.5px;line-height:20px;letter-spacing:0.1px;right:1256.4px;-webkit-text-stroke:.3px;">15%</div>
<div class="t" style="top:487.5px;font-size:15.5px;line-height:20px;letter-spacing:0.1px;right:1167.9px;-webkit-text-stroke:.3px;">828,000</div>
<div class="t" style="top:489px;font-size:14.5px;line-height:20px;left:518px;width:300px;text-align:center;-webkit-text-stroke:.45px;">=</div>
<div class="t" style="top:487.5px;font-size:15.5px;line-height:20px;letter-spacing:0.1px;right:1063.4px;-webkit-text-stroke:.3px;">703,800</div>
<div class="t" style="top:488.7px;font-size:14.5px;line-height:20px;left:622.6px;width:300px;text-align:center;-webkit-text-stroke:.45px;">+</div>
<div class="t" style="top:487.5px;font-size:15.5px;line-height:20px;letter-spacing:0.1px;right:958.9px;-webkit-text-stroke:.3px;">124,200</div>
<div class="t" style="top:487.5px;font-size:15.5px;line-height:20px;letter-spacing:0.1px;right:864.9px;-webkit-text-stroke:.3px;">0</div>
<div class="btn" style="left:973.2px;top:486.2px;width:25.6px;height:22.6px;border-color:#e4e4e4"><svg style="left:5.8px;top:4.5px" width="12.6" height="12.6"><use href="#i-pen"/></svg></div>
<div class="t" style="top:487.5px;font-size:15.5px;line-height:20px;color:#1b12f5;letter-spacing:0.1px;right:724.9px;-webkit-text-stroke:.3px;">124,200</div>
<div class="t" style="top:487.3px;font-size:15.5px;line-height:20px;left:959.5px;width:300px;text-align:center;-webkit-text-stroke:.45px;">-</div>
<div class="t" style="top:487.5px;font-size:15.5px;line-height:20px;letter-spacing:0.1px;right:623.4px;-webkit-text-stroke:.3px;">0</div>
<div class="t" style="top:489px;font-size:14.5px;line-height:20px;left:1068.6px;width:300px;text-align:center;-webkit-text-stroke:.45px;">=</div>
<div class="pill" style="left:1225px;top:486px;background:#ff8f8f"></div>
<div class="t h" style="left:1232.7px;top:489.6px;font-size:13.2px;line-height:15.8px;color:#fff">미</div>
<div class="t" style="top:487.5px;font-size:15.5px;line-height:20px;letter-spacing:0.1px;right:493.9px;-webkit-text-stroke:.3px;">124,200</div>
<div class="btn" style="left:1342.5px;top:484.5px;width:84.2px;height:26px"></div>
<div class="t h hm" style="left:1355.7px;top:490.3px;font-size:12px;line-height:14.4px">수납관리</div>
<svg style="left:1400.2px;top:490.8px" width="14" height="14"><use href="#i-coin"/></svg>
<div class="t" style="top:487.5px;font-size:15.5px;line-height:20px;letter-spacing:0.56px;left:1417.43px;width:300px;text-align:center;-webkit-text-stroke:.3px;">2025-12-05</div>
<div class="cb" style="left:376.2px;top:536.3px"></div>
<svg style="left:458px;top:540.2px;color:#111" width="11.5" height="11.5"><use href="#i-mag"/></svg>
<div style="left:417px;top:539px;width:39px;height:13px;background:#bdbdc2;border-radius:5px;filter:blur(3.2px);opacity:.7"></div>
<div class="t" style="top:535.5px;font-size:15.5px;line-height:20px;letter-spacing:0.1px;left:488.6px;-webkit-text-stroke:.3px;">4</div>
<div class="t h hm" style="left:497.6px;top:537.3px;font-size:13.7px;line-height:16.4px">등급</div>
<div class="t" style="top:535.5px;font-size:15.5px;line-height:20px;left:377.8px;width:300px;text-align:center;-webkit-text-stroke:.3px;">/</div>
<div class="t" style="top:535.5px;font-size:15.5px;line-height:20px;letter-spacing:0.1px;right:1256.4px;-webkit-text-stroke:.3px;">15%</div>
<div class="t" style="top:535.5px;font-size:15.5px;line-height:20px;letter-spacing:0.1px;right:1167.9px;-webkit-text-stroke:.3px;">491,600</div>
<div class="t" style="top:537px;font-size:14.5px;line-height:20px;left:518px;width:300px;text-align:center;-webkit-text-stroke:.45px;">=</div>
<div class="t" style="top:535.5px;font-size:15.5px;line-height:20px;letter-spacing:0.1px;right:1063.4px;-webkit-text-stroke:.3px;">417,860</div>
<div class="t" style="top:536.7px;font-size:14.5px;line-height:20px;left:622.6px;width:300px;text-align:center;-webkit-text-stroke:.45px;">+</div>
<div class="t" style="top:535.5px;font-size:15.5px;line-height:20px;letter-spacing:0.1px;right:958.9px;-webkit-text-stroke:.3px;">73,740</div>
<div class="t" style="top:535.5px;font-size:15.5px;line-height:20px;letter-spacing:0.1px;right:864.9px;-webkit-text-stroke:.3px;">0</div>
<div class="btn" style="left:973.2px;top:534.2px;width:25.6px;height:22.6px;border-color:#e4e4e4"><svg style="left:5.8px;top:4.5px" width="12.6" height="12.6"><use href="#i-pen"/></svg></div>
<div class="t" style="top:535.5px;font-size:15.5px;line-height:20px;color:#1b12f5;letter-spacing:0.1px;right:724.9px;-webkit-text-stroke:.3px;">73,740</div>
<div class="t" style="top:535.3px;font-size:15.5px;line-height:20px;left:959.5px;width:300px;text-align:center;-webkit-text-stroke:.45px;">-</div>
<div class="t" style="top:535.5px;font-size:15.5px;line-height:20px;letter-spacing:0.1px;right:623.4px;-webkit-text-stroke:.3px;">0</div>
<div class="t" style="top:537px;font-size:14.5px;line-height:20px;left:1068.6px;width:300px;text-align:center;-webkit-text-stroke:.45px;">=</div>
<div class="pill" style="left:1225px;top:534px;background:#ff8f8f"></div>
<div class="t h" style="left:1232.7px;top:537.6px;font-size:13.2px;line-height:15.8px;color:#fff">미</div>
<div class="t" style="top:535.5px;font-size:15.5px;line-height:20px;letter-spacing:0.1px;right:493.9px;-webkit-text-stroke:.3px;">73,740</div>
<div class="btn" style="left:1342.5px;top:532.5px;width:84.2px;height:26px"></div>
<div class="t h hm" style="left:1355.7px;top:538.3px;font-size:12px;line-height:14.4px">수납관리</div>
<svg style="left:1400.2px;top:538.8px" width="14" height="14"><use href="#i-coin"/></svg>
<div class="t" style="top:535.5px;font-size:15.5px;line-height:20px;letter-spacing:0.56px;left:1417.43px;width:300px;text-align:center;-webkit-text-stroke:.3px;">2025-12-05</div>
<div class="cb" style="left:376.2px;top:584.3px"></div>
<svg style="left:458px;top:588.2px;color:#111" width="11.5" height="11.5"><use href="#i-mag"/></svg>
<div style="left:418px;top:587px;width:38px;height:13px;background:#bdbdc2;border-radius:5px;filter:blur(3.2px);opacity:.7"></div>
<div class="t" style="top:583.5px;font-size:15.5px;line-height:20px;letter-spacing:0.1px;left:488.6px;-webkit-text-stroke:.3px;">4</div>
<div class="t h hm" style="left:497.6px;top:585.3px;font-size:13.7px;line-height:16.4px">등급</div>
<div class="t" style="top:583.5px;font-size:15.5px;line-height:20px;left:377.8px;width:300px;text-align:center;-webkit-text-stroke:.3px;">/</div>
<div class="t" style="top:583.5px;font-size:15.5px;line-height:20px;letter-spacing:0.1px;right:1256.4px;-webkit-text-stroke:.3px;">15%</div>
<div class="t" style="top:583.5px;font-size:15.5px;line-height:20px;letter-spacing:0.1px;right:1167.9px;-webkit-text-stroke:.3px;">993,600</div>
<div class="t" style="top:585px;font-size:14.5px;line-height:20px;left:518px;width:300px;text-align:center;-webkit-text-stroke:.45px;">=</div>
<div class="t" style="top:583.5px;font-size:15.5px;line-height:20px;letter-spacing:0.1px;right:1063.4px;-webkit-text-stroke:.3px;">844,560</div>
<div class="t" style="top:584.7px;font-size:14.5px;line-height:20px;left:622.6px;width:300px;text-align:center;-webkit-text-stroke:.45px;">+</div>
<div class="t" style="top:583.5px;font-size:15.5px;line-height:20px;letter-spacing:0.1px;right:958.9px;-webkit-text-stroke:.3px;">149,040</div>
<div class="t" style="top:583.5px;font-size:15.5px;line-height:20px;letter-spacing:0.1px;right:864.9px;-webkit-text-stroke:.3px;">0</div>
<div class="btn" style="left:973.2px;top:582.2px;width:25.6px;height:22.6px;border-color:#e4e4e4"><svg style="left:5.8px;top:4.5px" width="12.6" height="12.6"><use href="#i-pen"/></svg></div>
<div class="t" style="top:583.5px;font-size:15.5px;line-height:20px;color:#1b12f5;letter-spacing:0.1px;right:724.9px;-webkit-text-stroke:.3px;">149,040</div>
<div class="t" style="top:583.3px;font-size:15.5px;line-height:20px;left:959.5px;width:300px;text-align:center;-webkit-text-stroke:.45px;">-</div>
<div class="t" style="top:583.5px;font-size:15.5px;line-height:20px;letter-spacing:0.1px;right:623.4px;-webkit-text-stroke:.3px;">0</div>
<div class="t" style="top:585px;font-size:14.5px;line-height:20px;left:1068.6px;width:300px;text-align:center;-webkit-text-stroke:.45px;">=</div>
<div class="pill" style="left:1225px;top:582px;background:#ff8f8f"></div>
<div class="t h" style="left:1232.7px;top:585.6px;font-size:13.2px;line-height:15.8px;color:#fff">미</div>
<div class="t" style="top:583.5px;font-size:15.5px;line-height:20px;letter-spacing:0.1px;right:493.9px;-webkit-text-stroke:.3px;">149,040</div>
<div class="btn" style="left:1342.5px;top:580.5px;width:84.2px;height:26px"></div>
<div class="t h hm" style="left:1355.7px;top:586.3px;font-size:12px;line-height:14.4px">수납관리</div>
<svg style="left:1400.2px;top:586.8px" width="14" height="14"><use href="#i-coin"/></svg>
<div class="t" style="top:583.5px;font-size:15.5px;line-height:20px;letter-spacing:0.56px;left:1417.43px;width:300px;text-align:center;-webkit-text-stroke:.3px;">2025-12-05</div>
<div class="cb" style="left:376.2px;top:632.3px"></div>
<svg style="left:458px;top:636.2px;color:#111" width="11.5" height="11.5"><use href="#i-mag"/></svg>
<div style="left:418px;top:635px;width:38px;height:13px;background:#bdbdc2;border-radius:5px;filter:blur(3.2px);opacity:.7"></div>
<div class="t" style="top:631.5px;font-size:15.5px;line-height:20px;letter-spacing:0.1px;left:488.6px;-webkit-text-stroke:.3px;">3</div>
<div class="t h hm" style="left:497.6px;top:633.3px;font-size:13.7px;line-height:16.4px">등급</div>
<div class="t" style="top:631.5px;font-size:15.5px;line-height:20px;left:377.8px;width:300px;text-align:center;-webkit-text-stroke:.3px;">/</div>
<div class="t" style="top:631.5px;font-size:15.5px;line-height:20px;letter-spacing:0.1px;right:1256.4px;-webkit-text-stroke:.3px;">9%</div>
<div class="t" style="top:631.5px;font-size:15.5px;line-height:20px;letter-spacing:0.1px;right:1167.9px;-webkit-text-stroke:.3px;">993,600</div>
<div class="t" style="top:633px;font-size:14.5px;line-height:20px;left:518px;width:300px;text-align:center;-webkit-text-stroke:.45px;">=</div>
<div class="t" style="top:631.5px;font-size:15.5px;line-height:20px;letter-spacing:0.1px;right:1063.4px;-webkit-text-stroke:.3px;">904,180</div>
<div class="t" style="top:632.7px;font-size:14.5px;line-height:20px;left:622.6px;width:300px;text-align:center;-webkit-text-stroke:.45px;">+</div>
<div class="t" style="top:631.5px;font-size:15.5px;line-height:20px;letter-spacing:0.1px;right:958.9px;-webkit-text-stroke:.3px;">89,420</div>
<div class="t" style="top:631.5px;font-size:15.5px;line-height:20px;letter-spacing:0.1px;right:864.9px;-webkit-text-stroke:.3px;">0</div>
<div class="btn" style="left:973.2px;top:630.2px;width:25.6px;height:22.6px;border-color:#e4e4e4"><svg style="left:5.8px;top:4.5px" width="12.6" height="12.6"><use href="#i-pen"/></svg></div>
<div class="t" style="top:631.5px;font-size:15.5px;line-height:20px;color:#1b12f5;letter-spacing:0.1px;right:724.9px;-webkit-text-stroke:.3px;">89,420</div>
<div class="t" style="top:631.3px;font-size:15.5px;line-height:20px;left:959.5px;width:300px;text-align:center;-webkit-text-stroke:.45px;">-</div>
<div class="t" style="top:631.5px;font-size:15.5px;line-height:20px;letter-spacing:0.1px;right:623.4px;-webkit-text-stroke:.3px;">0</div>
<div class="t" style="top:633px;font-size:14.5px;line-height:20px;left:1068.6px;width:300px;text-align:center;-webkit-text-stroke:.45px;">=</div>
<div class="pill" style="left:1225px;top:630px;background:#ff8f8f"></div>
<div class="t h" style="left:1232.7px;top:633.6px;font-size:13.2px;line-height:15.8px;color:#fff">미</div>
<div class="t" style="top:631.5px;font-size:15.5px;line-height:20px;letter-spacing:0.1px;right:493.9px;-webkit-text-stroke:.3px;">89,420</div>
<div class="btn" style="left:1342.5px;top:628.5px;width:84.2px;height:26px"></div>
<div class="t h hm" style="left:1355.7px;top:634.3px;font-size:12px;line-height:14.4px">수납관리</div>
<svg style="left:1400.2px;top:634.8px" width="14" height="14"><use href="#i-coin"/></svg>
<div class="t" style="top:631.5px;font-size:15.5px;line-height:20px;letter-spacing:0.56px;left:1417.43px;width:300px;text-align:center;-webkit-text-stroke:.3px;">2025-12-05</div>
<div class="cb" style="left:376.2px;top:680.3px"></div>
<svg style="left:458px;top:684.2px;color:#111" width="11.5" height="11.5"><use href="#i-mag"/></svg>
<div style="left:417px;top:683px;width:39px;height:13px;background:#bdbdc2;border-radius:5px;filter:blur(3.2px);opacity:.7"></div>
<div class="t" style="top:679.5px;font-size:15.5px;line-height:20px;letter-spacing:0.1px;left:488.6px;-webkit-text-stroke:.3px;">4</div>
<div class="t h hm" style="left:497.6px;top:681.3px;font-size:13.7px;line-height:16.4px">등급</div>
<div class="t" style="top:679.5px;font-size:15.5px;line-height:20px;left:377.8px;width:300px;text-align:center;-webkit-text-stroke:.3px;">/</div>
<div class="t" style="top:679.5px;font-size:15.5px;line-height:20px;letter-spacing:0.1px;right:1256.4px;-webkit-text-stroke:.3px;">0%</div>
<div class="t" style="top:679.5px;font-size:15.5px;line-height:20px;letter-spacing:0.1px;right:1167.9px;-webkit-text-stroke:.3px;">1,217,700</div>
<div class="t" style="top:681px;font-size:14.5px;line-height:20px;left:518px;width:300px;text-align:center;-webkit-text-stroke:.45px;">=</div>
<div class="t" style="top:679.5px;font-size:15.5px;line-height:20px;letter-spacing:0.1px;right:1063.4px;-webkit-text-stroke:.3px;">1,217,700</div>
<div class="t" style="top:680.7px;font-size:14.5px;line-height:20px;left:622.6px;width:300px;text-align:center;-webkit-text-stroke:.45px;">+</div>
<div class="t" style="top:679.5px;font-size:15.5px;line-height:20px;letter-spacing:0.1px;right:958.9px;-webkit-text-stroke:.3px;">0</div>
<div class="t" style="top:679.5px;font-size:15.5px;line-height:20px;letter-spacing:0.1px;right:864.9px;-webkit-text-stroke:.3px;">0</div>
<div class="btn" style="left:973.2px;top:678.2px;width:25.6px;height:22.6px;border-color:#e4e4e4"><svg style="left:5.8px;top:4.5px" width="12.6" height="12.6"><use href="#i-pen"/></svg></div>
<div class="t" style="top:679.5px;font-size:15.5px;line-height:20px;color:#1b12f5;letter-spacing:0.1px;right:724.9px;-webkit-text-stroke:.3px;">0</div>
<div class="t" style="top:679.3px;font-size:15.5px;line-height:20px;left:959.5px;width:300px;text-align:center;-webkit-text-stroke:.45px;">-</div>
<div class="t" style="top:679.5px;font-size:15.5px;line-height:20px;letter-spacing:0.1px;right:623.4px;-webkit-text-stroke:.3px;">0</div>
<div class="t" style="top:681px;font-size:14.5px;line-height:20px;left:1068.6px;width:300px;text-align:center;-webkit-text-stroke:.45px;">=</div>
<div class="pill" style="left:1225px;top:678px;background:#66cc77"></div>
<div class="t h" style="left:1232.4px;top:681.6px;font-size:13.2px;line-height:15.8px;color:#fff">기</div>
<div class="t" style="top:679.5px;font-size:15.5px;line-height:20px;letter-spacing:0.1px;right:493.9px;-webkit-text-stroke:.3px;">0</div>
<div class="btn" style="left:1342.5px;top:676.5px;width:84.2px;height:26px"></div>
<div class="t h hm" style="left:1355.7px;top:682.3px;font-size:12px;line-height:14.4px">수납관리</div>
<svg style="left:1400.2px;top:682.8px" width="14" height="14"><use href="#i-coin"/></svg>
<div class="t" style="top:679.5px;font-size:15.5px;line-height:20px;letter-spacing:0.56px;left:1417.43px;width:300px;text-align:center;-webkit-text-stroke:.3px;">2025-12-05</div>
<div class="cb" style="left:376.2px;top:728.3px"></div>
<svg style="left:458px;top:732.2px;color:#111" width="11.5" height="11.5"><use href="#i-mag"/></svg>
<div style="left:416px;top:731px;width:40px;height:13px;background:#bdbdc2;border-radius:5px;filter:blur(3.2px);opacity:.7"></div>
<div class="t" style="top:727.5px;font-size:15.5px;line-height:20px;letter-spacing:0.1px;left:488.6px;-webkit-text-stroke:.3px;">4</div>
<div class="t h hm" style="left:497.6px;top:729.3px;font-size:13.7px;line-height:16.4px">등급</div>
<div class="t" style="top:727.5px;font-size:15.5px;line-height:20px;left:377.8px;width:300px;text-align:center;-webkit-text-stroke:.3px;">/</div>
<div class="t" style="top:727.5px;font-size:15.5px;line-height:20px;letter-spacing:0.1px;right:1256.4px;-webkit-text-stroke:.3px;">15%</div>
<div class="t" style="top:727.5px;font-size:15.5px;line-height:20px;letter-spacing:0.1px;right:1167.9px;-webkit-text-stroke:.3px;">1,328,400</div>
<div class="t" style="top:729px;font-size:14.5px;line-height:20px;left:518px;width:300px;text-align:center;-webkit-text-stroke:.45px;">=</div>
<div class="t" style="top:727.5px;font-size:15.5px;line-height:20px;letter-spacing:0.1px;right:1063.4px;-webkit-text-stroke:.3px;">1,129,140</div>
<div class="t" style="top:728.7px;font-size:14.5px;line-height:20px;left:622.6px;width:300px;text-align:center;-webkit-text-stroke:.45px;">+</div>
<div class="t" style="top:727.5px;font-size:15.5px;line-height:20px;letter-spacing:0.1px;right:958.9px;-webkit-text-stroke:.3px;">199,260</div>
<div class="t" style="top:727.5px;font-size:15.5px;line-height:20px;letter-spacing:0.1px;right:864.9px;-webkit-text-stroke:.3px;">0</div>
<div class="btn" style="left:973.2px;top:726.2px;width:25.6px;height:22.6px;border-color:#e4e4e4"><svg style="left:5.8px;top:4.5px" width="12.6" height="12.6"><use href="#i-pen"/></svg></div>
<div class="t" style="top:727.5px;font-size:15.5px;line-height:20px;color:#1b12f5;letter-spacing:0.1px;right:724.9px;-webkit-text-stroke:.3px;">199,260</div>
<div class="t" style="top:727.3px;font-size:15.5px;line-height:20px;left:959.5px;width:300px;text-align:center;-webkit-text-stroke:.45px;">-</div>
<div class="t" style="top:727.5px;font-size:15.5px;line-height:20px;letter-spacing:0.1px;right:623.4px;-webkit-text-stroke:.3px;">0</div>
<div class="t" style="top:729px;font-size:14.5px;line-height:20px;left:1068.6px;width:300px;text-align:center;-webkit-text-stroke:.45px;">=</div>
<div class="pill" style="left:1225px;top:726px;background:#ff8f8f"></div>
<div class="t h" style="left:1232.7px;top:729.6px;font-size:13.2px;line-height:15.8px;color:#fff">미</div>
<div class="t" style="top:727.5px;font-size:15.5px;line-height:20px;letter-spacing:0.1px;right:493.9px;-webkit-text-stroke:.3px;">199,260</div>
<div class="btn" style="left:1342.5px;top:724.5px;width:84.2px;height:26px"></div>
<div class="t h hm" style="left:1355.7px;top:730.3px;font-size:12px;line-height:14.4px">수납관리</div>
<svg style="left:1400.2px;top:730.8px" width="14" height="14"><use href="#i-coin"/></svg>
<div class="t" style="top:727.5px;font-size:15.5px;line-height:20px;letter-spacing:0.56px;left:1417.43px;width:300px;text-align:center;-webkit-text-stroke:.3px;">2025-12-05</div>
<div class="cb" style="left:376.2px;top:776.3px"></div>
<svg style="left:458px;top:780.2px;color:#111" width="11.5" height="11.5"><use href="#i-mag"/></svg>
<div style="left:415px;top:779px;width:41px;height:13px;background:#bdbdc2;border-radius:5px;filter:blur(3.2px);opacity:.7"></div>
<div class="t" style="top:775.5px;font-size:15.5px;line-height:20px;letter-spacing:0.1px;left:488.6px;-webkit-text-stroke:.3px;">4</div>
<div class="t h hm" style="left:497.6px;top:777.3px;font-size:13.7px;line-height:16.4px">등급</div>
<div class="t" style="top:775.5px;font-size:15.5px;line-height:20px;left:377.8px;width:300px;text-align:center;-webkit-text-stroke:.3px;">/</div>
<div class="t" style="top:775.5px;font-size:15.5px;line-height:20px;letter-spacing:0.1px;right:1256.4px;-webkit-text-stroke:.3px;">15%</div>
<div class="t" style="top:775.5px;font-size:15.5px;line-height:20px;letter-spacing:0.1px;right:1167.9px;-webkit-text-stroke:.3px;">993,600</div>
<div class="t" style="top:777px;font-size:14.5px;line-height:20px;left:518px;width:300px;text-align:center;-webkit-text-stroke:.45px;">=</div>
<div class="t" style="top:775.5px;font-size:15.5px;line-height:20px;letter-spacing:0.1px;right:1063.4px;-webkit-text-stroke:.3px;">844,560</div>
<div class="t" style="top:776.7px;font-size:14.5px;line-height:20px;left:622.6px;width:300px;text-align:center;-webkit-text-stroke:.45px;">+</div>
<div class="t" style="top:775.5px;font-size:15.5px;line-height:20px;letter-spacing:0.1px;right:958.9px;-webkit-text-stroke:.3px;">149,040</div>
<div class="t" style="top:775.5px;font-size:15.5px;line-height:20px;letter-spacing:0.1px;right:864.9px;-webkit-text-stroke:.3px;">0</div>
<div class="btn" style="left:973.2px;top:774.2px;width:25.6px;height:22.6px;border-color:#e4e4e4"><svg style="left:5.8px;top:4.5px" width="12.6" height="12.6"><use href="#i-pen"/></svg></div>
<div class="t" style="top:775.5px;font-size:15.5px;line-height:20px;color:#1b12f5;letter-spacing:0.1px;right:724.9px;-webkit-text-stroke:.3px;">149,040</div>
<div class="t" style="top:775.3px;font-size:15.5px;line-height:20px;left:959.5px;width:300px;text-align:center;-webkit-text-stroke:.45px;">-</div>
<div class="t" style="top:775.5px;font-size:15.5px;line-height:20px;letter-spacing:0.1px;right:623.4px;-webkit-text-stroke:.3px;">0</div>
<div class="t" style="top:777px;font-size:14.5px;line-height:20px;left:1068.6px;width:300px;text-align:center;-webkit-text-stroke:.45px;">=</div>
<div class="pill" style="left:1225px;top:774px;background:#ff8f8f"></div>
<div class="t h" style="left:1232.7px;top:777.6px;font-size:13.2px;line-height:15.8px;color:#fff">미</div>
<div class="t" style="top:775.5px;font-size:15.5px;line-height:20px;letter-spacing:0.1px;right:493.9px;-webkit-text-stroke:.3px;">149,040</div>
<div class="btn" style="left:1342.5px;top:772.5px;width:84.2px;height:26px"></div>
<div class="t h hm" style="left:1355.7px;top:778.3px;font-size:12px;line-height:14.4px">수납관리</div>
<svg style="left:1400.2px;top:778.8px" width="14" height="14"><use href="#i-coin"/></svg>
<div class="t" style="top:775.5px;font-size:15.5px;line-height:20px;letter-spacing:0.56px;left:1417.43px;width:300px;text-align:center;-webkit-text-stroke:.3px;">2025-12-05</div>
<div class="sep" style="left:574px;top:186px;height:682px"></div>
<div class="sep" style="left:1011px;top:186px;height:682px"></div>
<div class="sep" style="left:1507px;top:186px;height:682px"></div>
<div class="sep" style="left:1626px;top:186px;height:682px"></div>
<div style="left:368px;top:817.5px;width:1432px;height:50.5px;background:linear-gradient(180deg,#f5f5f5 0,#efefef 45%,#dedede 100%);border-top:1px solid #e2e2e2;"></div>
<div class="sep" style="left:574px;top:818px;height:50px;background:#d4d4d4"></div>
<div class="sep" style="left:1011px;top:818px;height:50px;background:#d4d4d4"></div>
<div class="t h hm" style="left:464.1px;top:833.4px;font-size:14.4px;line-height:17.3px">계</div>
<div class="t" style="top:832px;font-size:15.5px;line-height:20px;letter-spacing:-0.06px;left:468.97px;width:300px;text-align:center;-webkit-text-stroke:.3px;">48,793,430</div>
<div class="t" style="top:833.5px;font-size:14.5px;line-height:20px;left:518.6px;width:300px;text-align:center;-webkit-text-stroke:.45px;">=</div>
<div class="t" style="top:832px;font-size:15.5px;line-height:20px;letter-spacing:-0.15px;left:571.82px;width:300px;text-align:center;-webkit-text-stroke:.3px;">44,987,440</div>
<div class="t" style="top:833.2px;font-size:14.5px;line-height:20px;left:622.6px;width:300px;text-align:center;-webkit-text-stroke:.45px;">+</div>
<div class="t" style="top:832px;font-size:15.5px;line-height:20px;left:677.5px;width:300px;text-align:center;-webkit-text-stroke:.3px;">3,805,990</div>
<div class="t" style="top:832px;font-size:15.5px;line-height:20px;letter-spacing:0.1px;right:864.9px;-webkit-text-stroke:.3px;">0</div>
<div class="t" style="top:832px;font-size:15.5px;line-height:20px;letter-spacing:-0.06px;left:911.72px;width:300px;text-align:center;-webkit-text-stroke:.3px;">3,805,990</div>
<div class="t" style="top:831.8px;font-size:15.5px;line-height:20px;left:960.5px;width:300px;text-align:center;-webkit-text-stroke:.45px;">-</div>
<div class="t" style="top:832px;font-size:15.5px;line-height:20px;letter-spacing:-0.59px;left:1022.25px;width:300px;text-align:center;-webkit-text-stroke:.3px;">169,740</div>
<div class="t" style="top:833.5px;font-size:14.5px;line-height:20px;left:1068.6px;width:300px;text-align:center;-webkit-text-stroke:.45px;">=</div>
<div class="t" style="top:832px;font-size:15.5px;line-height:20px;letter-spacing:-0.12px;left:1143.94px;width:300px;text-align:center;-webkit-text-stroke:.3px;">3,636,250</div>
<div class="t h hm" style="left:385px;top:885.8px;font-size:14.6px;line-height:17.5px;color:#333">조회 :</div>
<div class="t" style="top:884.5px;font-size:14px;line-height:20px;font-weight:700;-webkit-text-stroke:.25px;color:#111;letter-spacing:1.42px;left:281.01px;width:300px;text-align:center;">42</div>
<div class="t h hm" style="left:447.5px;top:885.6px;font-size:14.9px;line-height:17.9px;color:#ff1744">미납 :</div>
<div class="t" style="top:884.5px;font-size:14px;line-height:20px;font-weight:700;-webkit-text-stroke:.25px;color:#111;letter-spacing:1.42px;left:343.01px;width:300px;text-align:center;">28</div>
<div class="t h hm" style="left:510px;top:885.8px;font-size:14.6px;line-height:17.5px;color:#333">수납 :</div>
<div class="t" style="top:884.5px;font-size:14px;line-height:20px;font-weight:700;-webkit-text-stroke:.25px;color:#111;letter-spacing:-0.58px;left:403.51px;width:300px;text-align:center;">14</div>
<div style="left:603px;top:876.5px;width:120px;height:35px;background:#ff8c33;border-radius:4px;"></div>
<div class="t h" style="left:615px;top:886px;font-size:14.1px;line-height:16.9px;color:#fff">명세서 출력/발송</div>
<div class="bb" style="left:727px;top:876.5px;width:139.8px;height:35px"></div>
<div class="t h" style="left:740px;top:886.1px;font-size:14px;line-height:16.7px;color:#2d55c9">명세서 발송 대장</div>
<svg style="left:839px;top:886px" width="16" height="16"><use href="#i-print"/></svg>
<div class="bb" style="left:870px;top:876.5px;width:126.8px;height:35px"></div>
<div class="t h" style="left:883.3px;top:886.1px;font-size:14px;line-height:16.8px;color:#2d55c9">월간 수납 대장</div>
<svg style="left:969px;top:886px" width="16" height="16"><use href="#i-print"/></svg>
<div class="bb" style="left:1000px;top:876.5px;width:126.8px;height:35px"></div>
<div class="t h" style="left:1013.3px;top:886.1px;font-size:14px;line-height:16.8px;color:#2d55c9">월간 미납 대장</div>
<svg style="left:1099px;top:886px" width="16" height="16"><use href="#i-print"/></svg>
<div style="left:1137.5px;top:877px;width:188.8px;height:34.3px;background:#fff;border:1px solid #dcdcdc;border-radius:7px;"></div>
<div class="t h" style="left:1147px;top:886.3px;font-size:13.6px;line-height:16.3px">서식 일괄 출력</div>
<svg style="left:1310px;top:893px" width="8" height="4" viewBox="0 0 8 4"><path d="M0 0h8L4 4z" fill="#222"/></svg>
<div style="left:1694.8px;top:877.5px;width:90.5px;height:33px;background:linear-gradient(100deg,#ff8f3f 0,#ff7a1a 50%,#ff6a00 100%);border-radius:17px;box-shadow:0 2px 4px rgba(0,0,0,.3);"></div>
<div class="t h" style="left:1707.5px;top:885.7px;font-size:14.1px;line-height:17px;color:#fff">사용법 보기</div>
<div style="left:1335px;top:144px;width:292px;height:663px;border:3px solid #ff6600;"></div>
<div style="left:597px;top:871px;width:736px;height:46px;border:3px solid #ff6600;"></div>
<svg style="left:270px;top:160px" width="100" height="215" viewBox="270 160 100 215" fill="none" stroke="#ff6600" stroke-width="3.8"><path d="M276 208.9H313V353H363.5"/><path d="M350.3 340L364.2 353L350.3 366.3" stroke-width="4" stroke-linecap="round" stroke-linejoin="miter"/></svg>
<div style="left:295.2px;top:167.7px;width:32px;height:32px;background:#ff6600;border-radius:50%;"></div>
<div class="t" style="top:172.9px;font-size:19px;line-height:22px;font-weight:700;-webkit-text-stroke:.25px;color:#fff;left:161px;width:300px;text-align:center;">1</div>
</body>
</html>
